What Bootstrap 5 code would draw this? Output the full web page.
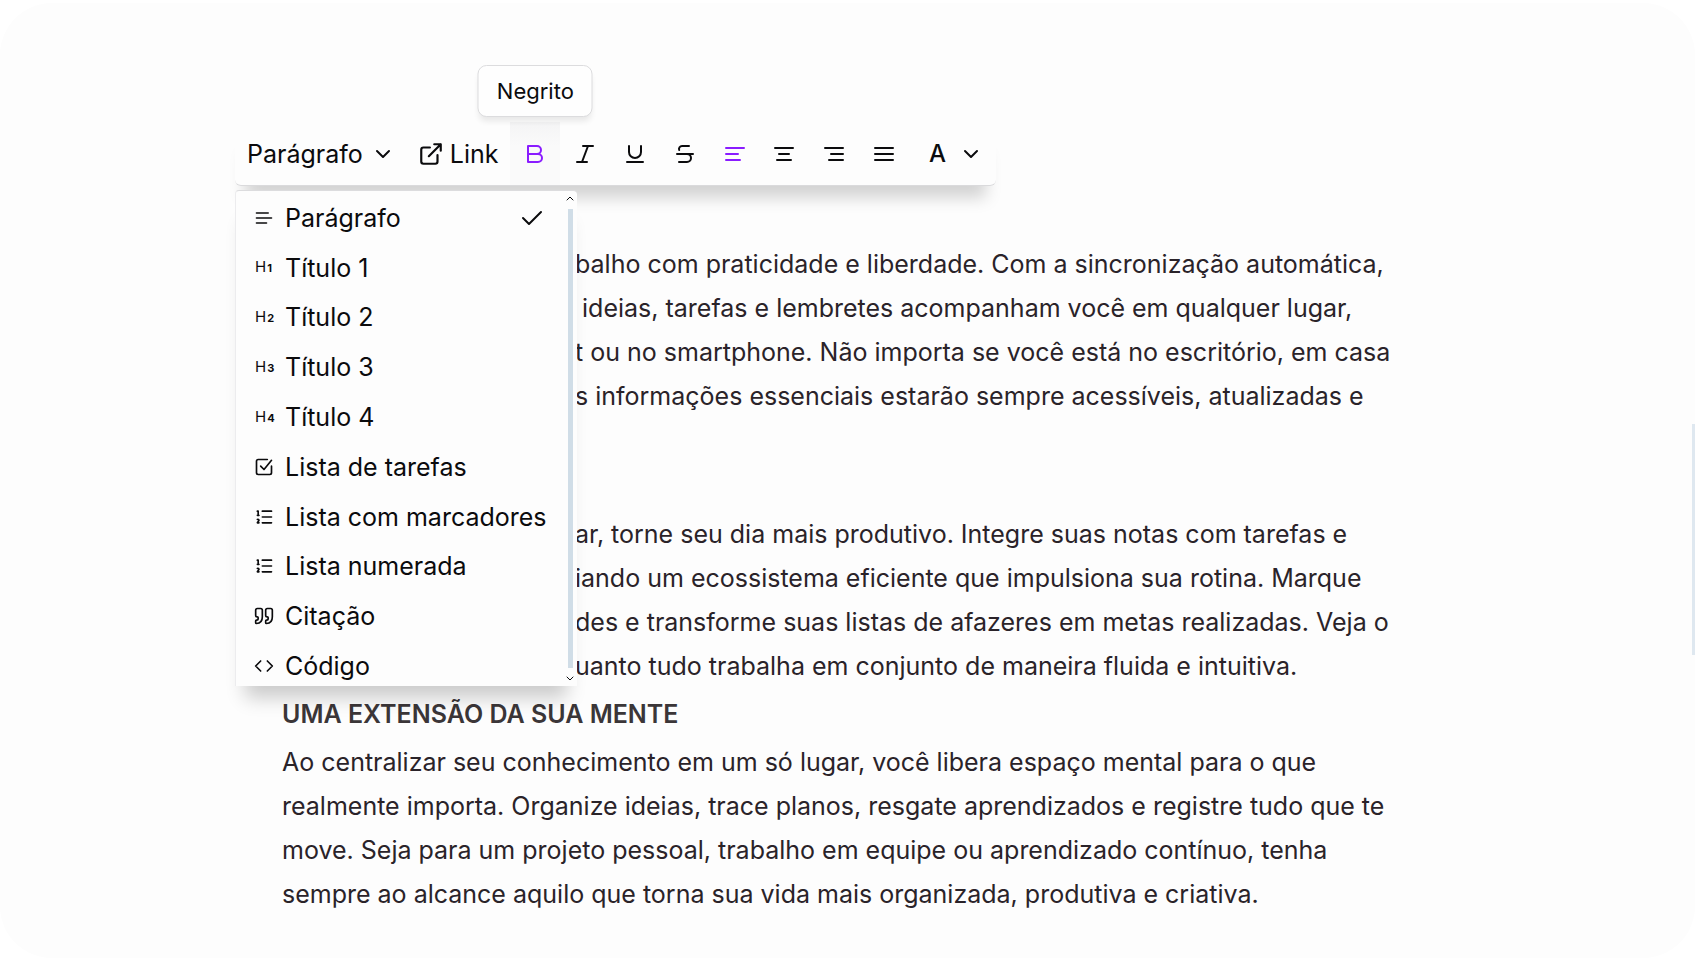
<!DOCTYPE html>
<html lang="pt-BR">
<head>
<meta charset="utf-8">
<meta name="viewport" content="width=device-width, initial-scale=1">
<title>Editor de notas</title>
<link href="https://cdn.jsdelivr.net/npm/bootstrap@5.3.0/dist/css/bootstrap.min.css" rel="stylesheet">
<style>
  :root { --ink: #0b0b0d; --accent: #8a1cff; --paper: #fdfdfd; --rail-color: #d0dde7; }
  body { background: #fff; font-family: Inter, "Liberation Sans", sans-serif; color: var(--ink); }
  svg { fill: none; stroke: currentColor; stroke-width: 2; stroke-linecap: round; stroke-linejoin: round; flex: none; }
  .frame { padding: 3px 0 5px; }
  .sheet { background: var(--paper); border-radius: 52px; }
  .editor { max-width: 1225px; padding-top: 119px; }

  .toolbar { max-width: 761px; height: 64px; background: var(--paper); border-bottom: 1px solid #dadadc; border-radius: 0 0 6px 6px; z-index: 3;
             box-shadow: 0 22px 16px -10px rgba(0,0,0,.17); }
  .tool { --bs-btn-color: var(--ink); --bs-btn-border-width: 0; --bs-btn-border-radius: 0; --bs-btn-font-size: 25px; --bs-btn-padding-x: 12px; --bs-btn-padding-y: 0;
          --bs-btn-hover-color: var(--accent); --bs-btn-active-color: var(--accent);
          display: flex; align-items: center; height: 63px; line-height: 30px; }
  .tool-block { padding: 0 11px 0 12px; gap: 8px; }
  .tool-link { gap: 6px; }
  .tool-cell { flex: 1 1 0; }
  .tool-icon { width: 100%; padding: 0; justify-content: center; }
  .tool-on { --bs-btn-color: var(--accent); }
  .tool-hover { background: linear-gradient(#f4f4f5, #fafafa 24px); }
  .tool-color { padding: 0 13px 0 20px; gap: 13px; font-size: 24px; font-weight: 500; }
  .tip { bottom: 68px; left: 50%; transform: translateX(-50%); padding: 0 18px; font-size: 22px; line-height: 50px; background: #fefefe;
         border: 1px solid #dcdcde; border-radius: 9px; box-shadow: 0 6px 6px -2px rgba(0,0,0,.09); }

  .blocks { top: 68px; left: 0; width: 342px; height: 496px; background: var(--paper); border-left: 1px solid #ececee; border-top: 1px solid #dcdcde;
            border-radius: 4px 4px 0 0; box-shadow: 0 22px 18px -10px rgba(0,0,0,.2); }
  .blocks ul { height: 500px; padding-top: 2px; }
  .blocks li { flex: 1 1 0; }
  .block-item { padding: 0 33px 0 18px; gap: 11px; font-size: 25px; line-height: 30px; color: var(--ink); background: none; border: 0; width: 100%; }
  .hd { width: 20px; font-size: 15px; line-height: 20px; padding-left: 1px; gap: 1px; }
  .hd b { font-size: 11px; }
  .rail { top: 0; right: 0; bottom: 0; width: 14px; padding: 4px 0; }
  .rail svg { stroke-width: 1; }
  .rail i { width: 5px; background: var(--rail-color); }

  .prose { padding: 56px 60px 36px 47px; font-size: 25px; line-height: 44px; color: #2a2329; }
  .prose h2 { font-size: 25px; font-weight: 600; line-height: 44px; margin: 0 0 4px; color: #3b3638; }
  .prose p { margin: 0 0 4px; }
  .prose .beside-menu { padding-left: 293px; }
  .prose .spaced { margin-bottom: 94px; }
  .page-rail { right: 0; top: 44%; bottom: 32%; width: 3px; background: #dfe8f0; }
</style>
</head>
<body>
<div class="frame min-vh-100 d-flex position-relative">
  <div class="sheet flex-fill">
    <main class="editor container-fluid px-0 mx-auto">
      <div class="toolbar d-flex position-relative" role="toolbar" aria-label="Formatação">
        <button type="button" class="btn tool tool-block" aria-expanded="true" aria-controls="blocks">Parágrafo
          <svg width="24" height="24" viewBox="0 0 24 24"><path d="m6 9 6 6 6-6"/></svg></button>
        <button type="button" class="btn tool tool-link"><svg width="26" height="26" viewBox="0 0 24 24"><path d="M15 3h6v6M10 14 21 3M18 13v6a2 2 0 0 1-2 2H5a2 2 0 0 1-2-2V8a2 2 0 0 1 2-2h6"/></svg>Link</button>
        <div class="tool-cell position-relative">
          <button type="button" class="btn tool tool-icon tool-on tool-hover" aria-label="Negrito" aria-pressed="true"><svg width="24" height="24" viewBox="0 0 24 24"><path d="M14 12a4 4 0 0 0 0-8H5v16h10a4 4 0 0 0 0-8H5"/></svg></button>
          <div class="tip position-absolute" role="tooltip">Negrito</div>
        </div>
        <div class="tool-cell"><button type="button" class="btn tool tool-icon" aria-label="Itálico"><svg width="24" height="24" viewBox="0 0 24 24"><path d="M20 4H10M14 20H4M15 4 9 20"/></svg></button></div>
        <div class="tool-cell"><button type="button" class="btn tool tool-icon" aria-label="Sublinhado"><svg width="24" height="24" viewBox="0 0 24 24"><path d="M6 4v6a6 6 0 0 0 12 0V4M4 20h16"/></svg></button></div>
        <div class="tool-cell"><button type="button" class="btn tool tool-icon" aria-label="Tachado"><svg width="24" height="24" viewBox="0 0 24 24"><path d="M16 4H9a3 3 0 0 0-2.83 4M14 12a4 4 0 0 1 0 8H6M4 12h16"/></svg></button></div>
        <div class="tool-cell"><button type="button" class="btn tool tool-icon tool-on" aria-label="Alinhar à esquerda" aria-pressed="true"><svg width="24" height="24" viewBox="0 0 24 24"><path d="M3 6h18M3 12h12M3 18h14"/></svg></button></div>
        <div class="tool-cell"><button type="button" class="btn tool tool-icon" aria-label="Centralizar"><svg width="24" height="24" viewBox="0 0 24 24"><path d="M3 6h18M7 12h10M5 18h14"/></svg></button></div>
        <div class="tool-cell"><button type="button" class="btn tool tool-icon" aria-label="Alinhar à direita"><svg width="24" height="24" viewBox="0 0 24 24"><path d="M3 6h18M9 12h12M7 18h14"/></svg></button></div>
        <div class="tool-cell"><button type="button" class="btn tool tool-icon" aria-label="Justificar"><svg width="24" height="24" viewBox="0 0 24 24"><path d="M3 6h18M3 12h18M3 18h18"/></svg></button></div>
        <button type="button" class="btn tool tool-color" aria-label="Cor do texto">A
          <svg width="24" height="24" viewBox="0 0 24 24"><path d="m6 9 6 6 6-6"/></svg></button>

        <div class="blocks position-absolute" id="blocks">
          <ul class="list-unstyled d-flex flex-column mb-0 text-nowrap">
            <li class="d-flex"><button type="button" class="block-item d-flex align-items-center"><svg width="20" height="20" viewBox="0 0 24 24"><path d="M17 6H3M21 12H3M15 18H3"/></svg>Parágrafo<svg class="ms-auto" width="24" height="24" viewBox="0 0 24 24"><path d="M21 6 9 18l-6-6"/></svg></button></li>
            <li class="d-flex"><button type="button" class="block-item d-flex align-items-center"><span class="hd d-flex align-items-baseline" aria-hidden="true">H<b>1</b></span>Título 1</button></li>
            <li class="d-flex"><button type="button" class="block-item d-flex align-items-center"><span class="hd d-flex align-items-baseline" aria-hidden="true">H<b>2</b></span>Título 2</button></li>
            <li class="d-flex"><button type="button" class="block-item d-flex align-items-center"><span class="hd d-flex align-items-baseline" aria-hidden="true">H<b>3</b></span>Título 3</button></li>
            <li class="d-flex"><button type="button" class="block-item d-flex align-items-center"><span class="hd d-flex align-items-baseline" aria-hidden="true">H<b>4</b></span>Título 4</button></li>
            <li class="d-flex"><button type="button" class="block-item d-flex align-items-center"><svg width="20" height="20" viewBox="0 0 24 24"><path d="m8 11 4 4L21 4M21 11v8a2 2 0 0 1-2 2H5a2 2 0 0 1-2-2V5a2 2 0 0 1 2-2h11"/></svg>Lista de tarefas</button></li>
            <li class="d-flex"><button type="button" class="block-item d-flex align-items-center"><svg width="20" height="20" viewBox="0 0 24 24"><path d="M10 5h11M10 12h11M10 19h11M4 5h1v5M4 10h2M6 19H4c0-1 2-2 2-3s-1-1.5-2-1"/></svg>Lista com marcadores</button></li>
            <li class="d-flex"><button type="button" class="block-item d-flex align-items-center"><svg width="20" height="20" viewBox="0 0 24 24"><path d="M10 5h11M10 12h11M10 19h11M4 5h1v5M4 10h2M6 19H4c0-1 2-2 2-3s-1-1.5-2-1"/></svg>Lista numerada</button></li>
            <li class="d-flex"><button type="button" class="block-item d-flex align-items-center"><svg width="20" height="20" viewBox="0 0 24 24"><path d="M3 21c3 0 7-1 7-8V5c0-1.25-.76-2-2-2H4c-1.25 0-2 .75-2 2v6c0 1.250.75 2 2 2 1 0 1 0 1 1v1c0 1-1 2-2 2s-1 0-1 1v2c0 1 0 1 1 1zM15 21c3 0 7-1 7-8V5c0-1.250-.76-2-2-2h-4c-1.250 0-2 .75-2 2v6c0 1.250.75 2 2 2 1 0 1 0 1 1v1c0 1-1 2-2 2s-1 0-1 1v2c0 1 0 1 1 1z"/></svg>Citação</button></li>
            <li class="d-flex"><button type="button" class="block-item d-flex align-items-center"><svg width="20" height="20" viewBox="0 0 24 24"><path d="m16 18 6-6-6-6M8 6l-6 6 6 6"/></svg>Código</button></li>
          </ul>
          <div class="rail position-absolute d-flex flex-column align-items-center gap-2" aria-hidden="true">
            <svg width="8" height="6" viewBox="0 0 8 6"><path d="m1 5 3-3 3 3"/></svg>
            <i class="flex-fill"></i>
            <svg width="8" height="6" viewBox="0 0 8 6"><path d="m1 1 3 3 3-3"/></svg>
          </div>
        </div>
      </div>

      <article class="prose">
        <p class="beside-menu spaced">balho com praticidade e liberdade. Com a sincronização automática,<br>
          &nbsp;ideias, tarefas e lembretes acompanham você em qualquer lugar,<br>
          t ou no smartphone. Não importa se você está no escritório, em casa<br>
          s informações essenciais estarão sempre acessíveis, atualizadas e</p>
        <p class="beside-menu">ar, torne seu dia mais produtivo. Integre suas notas com tarefas e<br>
          iando um ecossistema eficiente que impulsiona sua rotina. Marque<br>
          des e transforme suas listas de afazeres em metas realizadas. Veja o<br>
          uanto tudo trabalha em conjunto de maneira fluida e intuitiva.</p>
        <h2>UMA EXTENSÃO DA SUA MENTE</h2>
        <p>Ao centralizar seu conhecimento em um só lugar, você libera espaço mental para o que realmente importa. Organize ideias, trace planos, resgate aprendizados e registre tudo que te move. Seja para um projeto pessoal, trabalho em equipe ou aprendizado contínuo, tenha sempre ao alcance aquilo que torna sua vida mais organizada, produtiva e criativa.</p>
      </article>
    </main>
  </div>
  <div class="page-rail position-absolute" aria-hidden="true"></div>
</div>
<script src="https://cdn.jsdelivr.net/npm/bootstrap@5.3.0/dist/js/bootstrap.bundle.min.js"></script>
</body>
</html>
